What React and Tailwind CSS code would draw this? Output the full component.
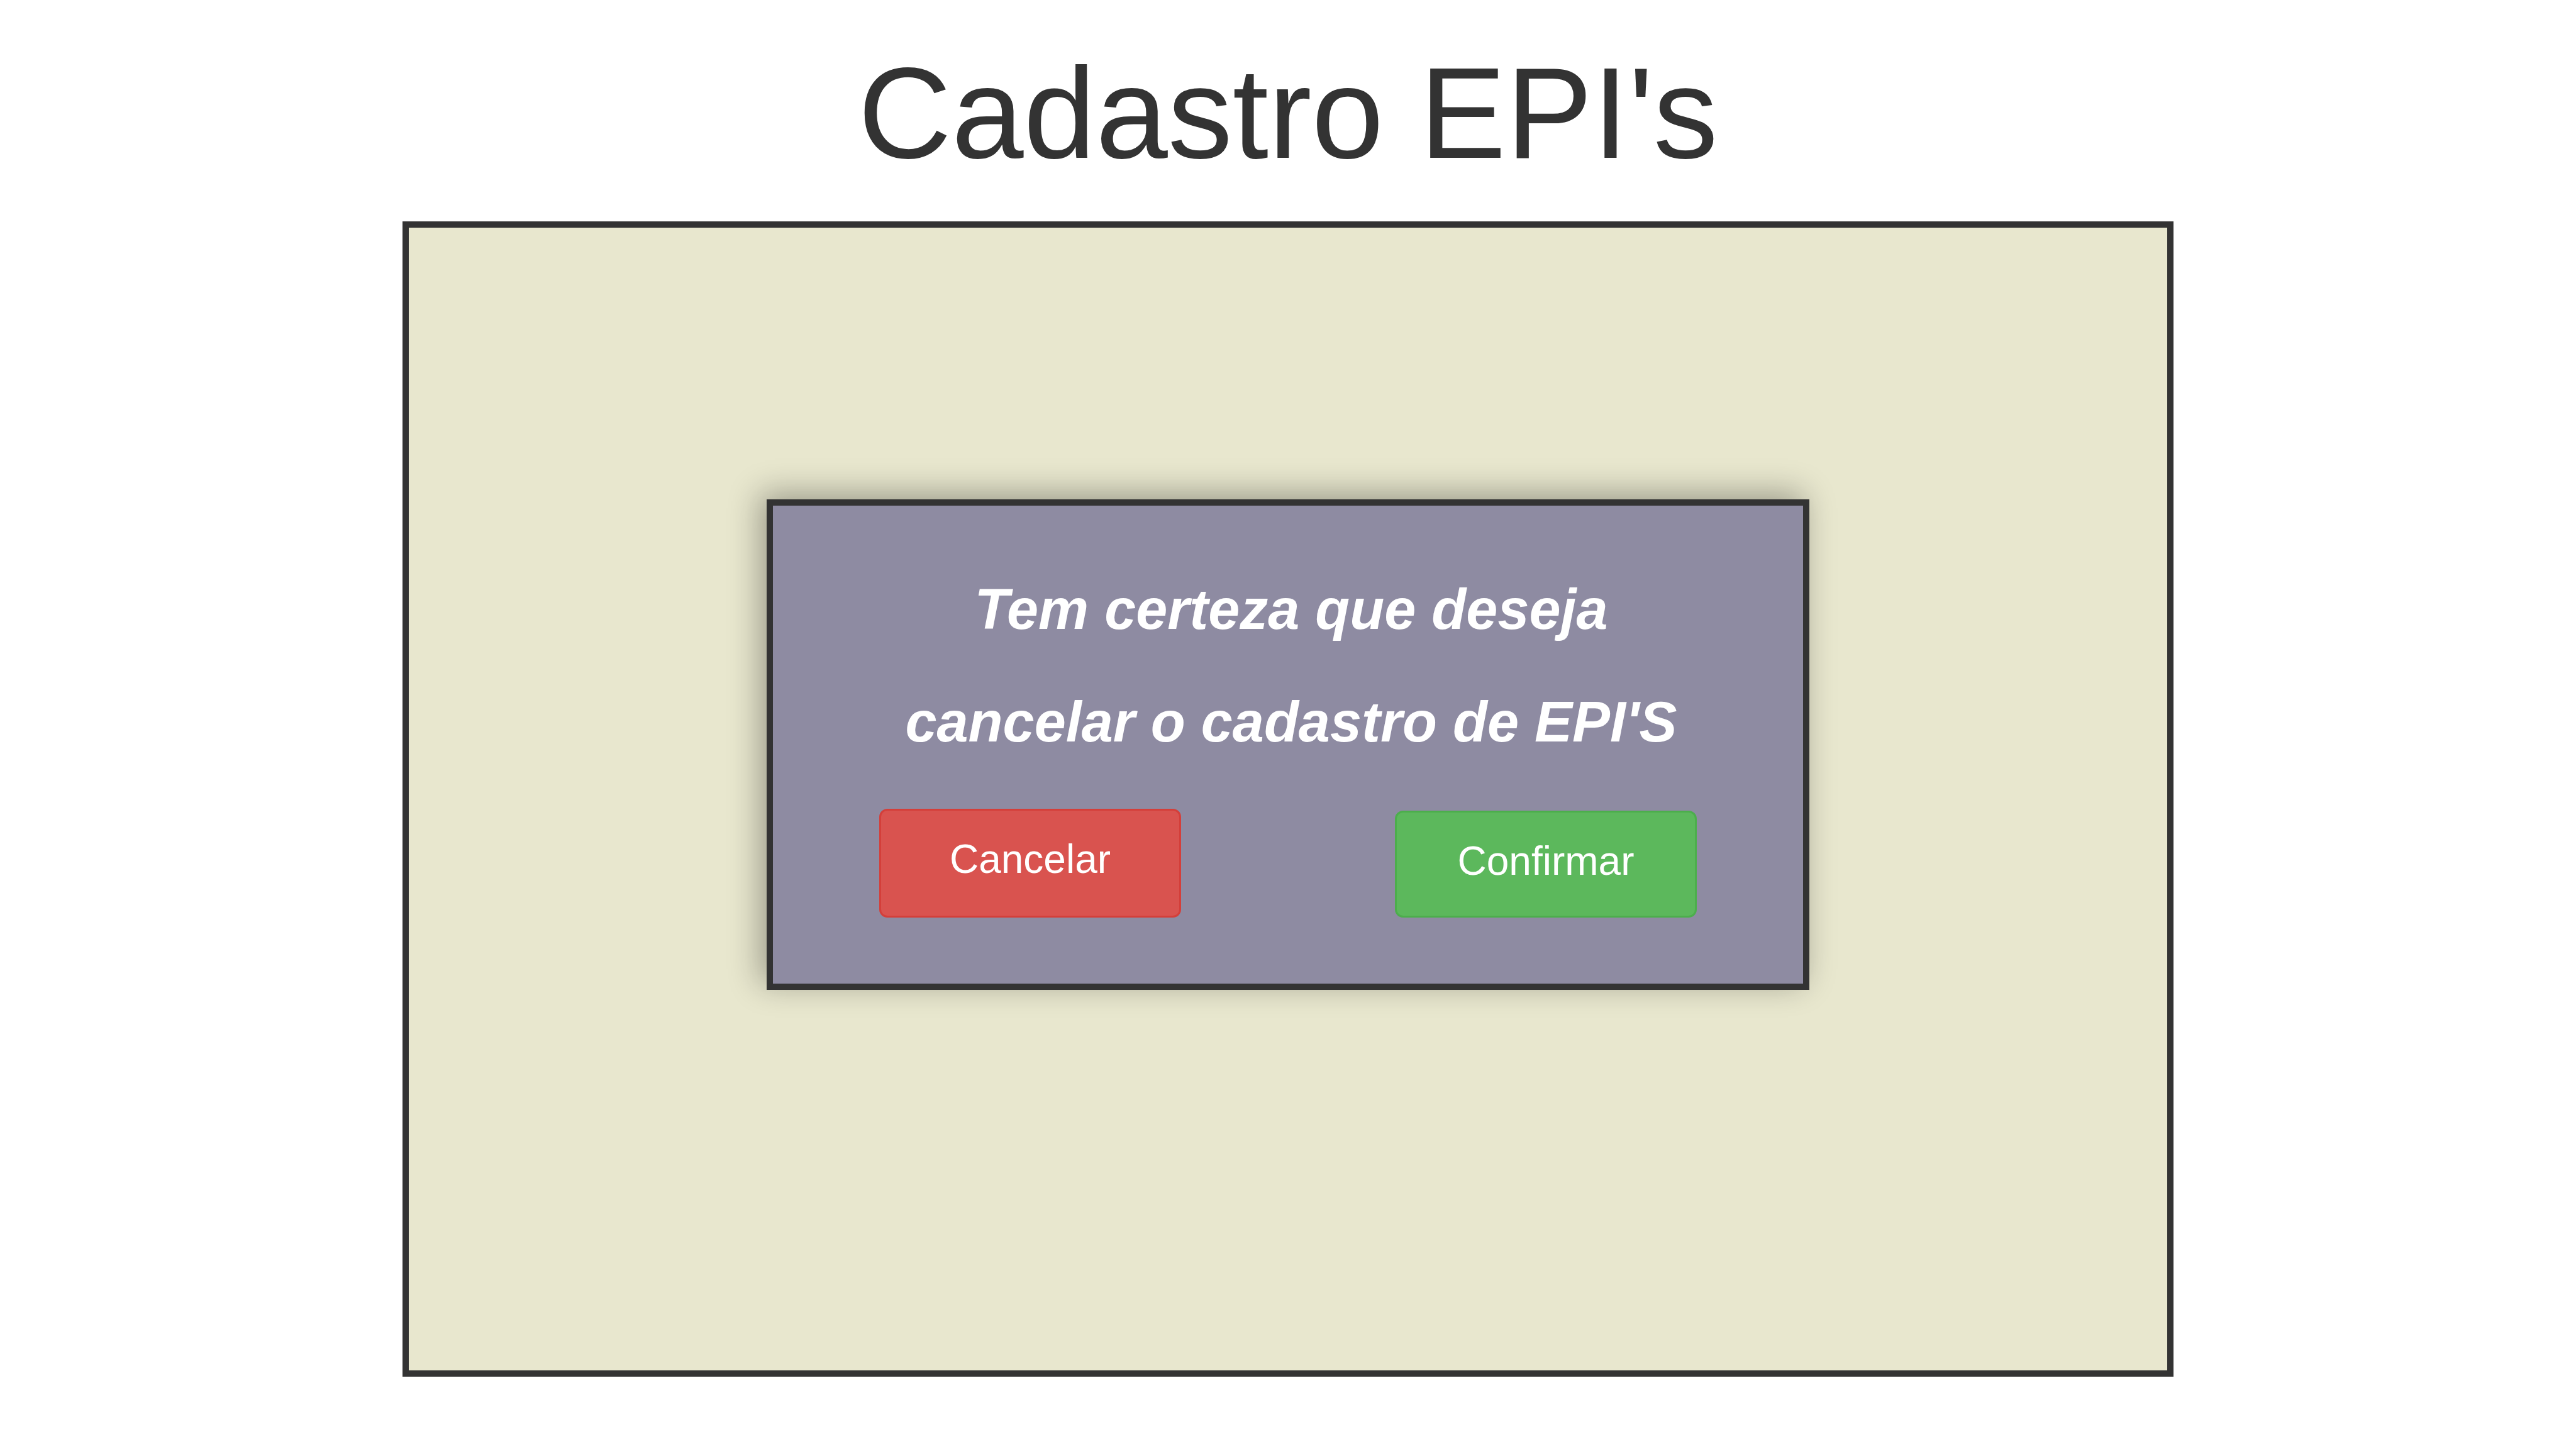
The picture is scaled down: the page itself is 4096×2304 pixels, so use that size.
export default function App() {
  return (
    <div className="flex min-h-screen flex-col items-center bg-white pt-[68px] pb-[115px] font-['Liberation_Sans',Arial,sans-serif] text-[#333333]">
      <h1 className="mb-[60px] text-center text-[206px] leading-[224px] font-normal">
        Cadastro EPI's
      </h1>
      <main className="flex w-[68.75%] flex-1 flex-col items-center border-[10px] border-[#333333] bg-[#e8e7ce] pt-[432px]">
        <section
          role="dialog"
          aria-labelledby="pergunta"
          className="w-[59.3%] border-[10px] border-[#333333] bg-[#8e8ba2] px-[169px] pt-[76px] pb-[105px] shadow-[-10px_-10px_48px_rgba(0,0,0,0.33)]"
        >
          <h2
            id="pergunta"
            className="pl-[10px] text-center text-[90px] leading-[179px] font-bold text-white italic"
          >
            Tem certeza que deseja
            <br />
            cancelar o cadastro de EPI'S
          </h2>
          <div className="mt-[48px] flex items-end justify-between text-[64px] leading-[80px] text-white">
            <button
              type="button"
              className="w-[480px] rounded-[13px] border-[3px] border-[#d43f3a] bg-[#d9534f] pt-[37px] pb-[50px]"
            >
              Cancelar
            </button>
            <button
              type="button"
              className="w-[480px] rounded-[13px] border-[3px] border-[#4cae4c] bg-[#5cb85c] pt-[37px] pb-[47px]"
            >
              Confirmar
            </button>
          </div>
        </section>
      </main>
    </div>
  );
}
